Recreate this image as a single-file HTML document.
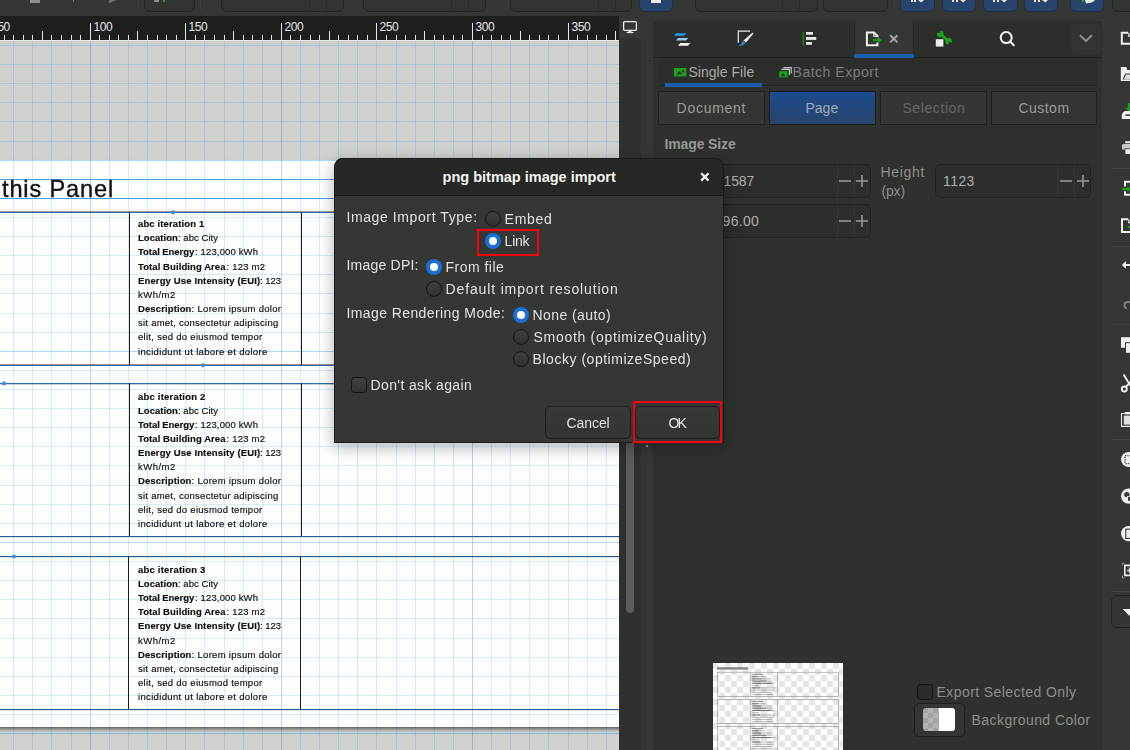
<!DOCTYPE html>
<html><head><meta charset="utf-8"><title>Inkscape</title>
<style>
html,body{margin:0;padding:0}
body{width:1130px;height:750px;overflow:hidden;position:relative;background:#353734;font-family:"Liberation Sans",sans-serif;}
div,span,svg{position:absolute;box-sizing:border-box}
.t{white-space:pre;line-height:1;}
.tb{top:-4px;height:16px;border:1px solid #232522;border-radius:6px;background:#323431}
.tb.bl{background:#29446c;border-color:#1d2f4c}
.tb i{position:absolute;top:0;bottom:0;width:1px;background:#2a2c29}
.btn{border:1px solid #1f211e;background:#343633}
.spin{border:1px solid #1f211e;border-radius:5px;background:#2c2e2b}
.spin i{position:absolute;top:0;bottom:0;width:1px;background:#363835}
.radio{width:16px;height:16px;border-radius:50%;border:1.2px solid #121411;background:linear-gradient(#3e403d,#30322f)}
.radio.on{border:none;background:#1a6fd9}
.radio.on::after{content:"";position:absolute;left:3.8px;top:3.8px;width:8.4px;height:8.4px;border-radius:50%;background:#fff}
.chk{width:16px;height:16px;border-radius:3.5px;border:1.2px solid #141613;background:linear-gradient(#3f413e,#323431)}
.dbtn{border:1px solid #1d1f1c;border-radius:5px;background:linear-gradient(#383a37,#323431)}
.red{border:2.2px solid #f80008}
.sep{height:1px;background:#42443f}
.ttl{-webkit-text-stroke:.35px #111}
.ct{-webkit-text-stroke:.16px #101010}

</style></head>
<body>
<div id='topbar' style='left:0;top:0;width:1130px;height:16px;background:#353734;overflow:hidden'>
<div style='left:30px;top:0;width:10px;height:3px;background:#8d8f8c'></div>
<div style='left:73px;top:0;width:1px;height:2px;background:#6d6f6c'></div>
<svg style='left:108px;top:0' width='12' height='4'><path d='M1 0 L9 0 L1 3.2Z' fill='#6d6f6c'/></svg>
<div class='tb' style='left:143.6px;width:51.0px'></div>
<div style='left:154px;top:0;width:5px;height:2px;background:#8d8f8c'></div>
<div style='left:163px;top:0;width:2px;height:2px;background:#1faa1f'></div>
<div style='left:137.5px;top:0;width:1px;height:10px;background:#3d3f3c'></div>
<div style='left:200px;top:0;width:1px;height:10px;background:#3d3f3c'></div>
<div class='tb' style='left:221.0px;width:122.6px'><i style='left:86.6px'></i><i style='left:103.6px'></i></div>
<div class='tb' style='left:363.4px;width:122.3px'><i style='left:86.3px'></i><i style='left:103.3px'></i></div>
<div class='tb' style='left:510.4px;width:122.1px'><i style='left:86.6px'></i><i style='left:103.6px'></i></div>
<div class='tb bl' style='left:638.7px;width:34.3px'></div>
<div style='left:651px;top:0;width:10px;height:3px;background:#efefed'></div>
<div class='tb' style='left:695.3px;width:122.3px'><i style='left:86.1px'></i><i style='left:103.1px'></i></div>
<div class='tb' style='left:823.2px;width:65.2px'></div>
<div style='left:894px;top:0;width:1px;height:10px;background:#3d3f3c'></div>
<div class='tb bl' style='left:900.4px;width:35.0px'></div>
<div style='left:910.9px;top:0;width:2px;height:2px;background:#e8e8e6'></div>
<div style='left:914.4px;top:0;width:2px;height:2px;background:#e8e8e6'></div>
<svg style='left:918.4px;top:0' width='8' height='4'><path d='M0 0 L6 0 L3.4 2.6Z' fill='#e8e8e6'/></svg>
<div class='tb bl' style='left:941.5px;width:34.9px'></div>
<div style='left:952.0px;top:0;width:2px;height:2px;background:#e8e8e6'></div>
<div style='left:955.5px;top:0;width:2px;height:2px;background:#e8e8e6'></div>
<svg style='left:959.5px;top:0' width='8' height='4'><path d='M0 0 L6 0 L3.4 2.6Z' fill='#e8e8e6'/></svg>
<div class='tb bl' style='left:982.5px;width:35.0px'></div>
<div style='left:993.0px;top:0;width:2px;height:2px;background:#e8e8e6'></div>
<div style='left:996.5px;top:0;width:2px;height:2px;background:#e8e8e6'></div>
<svg style='left:1000.5px;top:0' width='8' height='4'><path d='M0 0 L6 0 L3.4 2.6Z' fill='#e8e8e6'/></svg>
<div class='tb bl' style='left:1023.5px;width:34.9px'></div>
<div style='left:1034.0px;top:0;width:2px;height:2px;background:#e8e8e6'></div>
<div style='left:1037.5px;top:0;width:2px;height:2px;background:#e8e8e6'></div>
<svg style='left:1041.5px;top:0' width='8' height='4'><path d='M0 0 L6 0 L3.4 2.6Z' fill='#e8e8e6'/></svg>
<div class='tb bl' style='left:1069.6px;width:34.8px'></div>
<div style='left:1082px;top:0;width:2px;height:2px;background:#1faa1f'></div>
<svg style='left:1085px;top:0' width='12' height='4'><path d='M0 0 L10 0 Q8 3 1 3.5Z' fill='#e8e8e6'/></svg>
<div class='tb' style='left:1111.6px;width:28.4px'></div>
</div>
<div id='ruler' style='left:0;top:16px;width:619px;height:25px;background:#1d1f1c;overflow:hidden'>
<svg style='left:0;top:0' width='619' height='25' shape-rendering='crispEdges'><rect x='0' y='24' width='619' height='1' fill='#e9e9e7'/><rect x='4' y='19' width='1' height='5' fill='#e9e9e7'/><rect x='13' y='19' width='1' height='5' fill='#e9e9e7'/><rect x='23' y='19' width='1' height='5' fill='#e9e9e7'/><rect x='32' y='19' width='1' height='5' fill='#e9e9e7'/><rect x='42' y='15' width='1' height='9' fill='#e9e9e7'/><rect x='51' y='19' width='1' height='5' fill='#e9e9e7'/><rect x='61' y='19' width='1' height='5' fill='#e9e9e7'/><rect x='71' y='19' width='1' height='5' fill='#e9e9e7'/><rect x='80' y='19' width='1' height='5' fill='#e9e9e7'/><rect x='90' y='7' width='1' height='17' fill='#e9e9e7'/><rect x='99' y='19' width='1' height='5' fill='#e9e9e7'/><rect x='109' y='19' width='1' height='5' fill='#e9e9e7'/><rect x='118' y='19' width='1' height='5' fill='#e9e9e7'/><rect x='128' y='19' width='1' height='5' fill='#e9e9e7'/><rect x='137' y='15' width='1' height='9' fill='#e9e9e7'/><rect x='147' y='19' width='1' height='5' fill='#e9e9e7'/><rect x='157' y='19' width='1' height='5' fill='#e9e9e7'/><rect x='166' y='19' width='1' height='5' fill='#e9e9e7'/><rect x='176' y='19' width='1' height='5' fill='#e9e9e7'/><rect x='185' y='7' width='1' height='17' fill='#e9e9e7'/><rect x='195' y='19' width='1' height='5' fill='#e9e9e7'/><rect x='204' y='19' width='1' height='5' fill='#e9e9e7'/><rect x='214' y='19' width='1' height='5' fill='#e9e9e7'/><rect x='224' y='19' width='1' height='5' fill='#e9e9e7'/><rect x='233' y='15' width='1' height='9' fill='#e9e9e7'/><rect x='243' y='19' width='1' height='5' fill='#e9e9e7'/><rect x='252' y='19' width='1' height='5' fill='#e9e9e7'/><rect x='262' y='19' width='1' height='5' fill='#e9e9e7'/><rect x='271' y='19' width='1' height='5' fill='#e9e9e7'/><rect x='281' y='7' width='1' height='17' fill='#e9e9e7'/><rect x='290' y='19' width='1' height='5' fill='#e9e9e7'/><rect x='300' y='19' width='1' height='5' fill='#e9e9e7'/><rect x='310' y='19' width='1' height='5' fill='#e9e9e7'/><rect x='319' y='19' width='1' height='5' fill='#e9e9e7'/><rect x='329' y='15' width='1' height='9' fill='#e9e9e7'/><rect x='338' y='19' width='1' height='5' fill='#e9e9e7'/><rect x='348' y='19' width='1' height='5' fill='#e9e9e7'/><rect x='357' y='19' width='1' height='5' fill='#e9e9e7'/><rect x='367' y='19' width='1' height='5' fill='#e9e9e7'/><rect x='376' y='7' width='1' height='17' fill='#e9e9e7'/><rect x='386' y='19' width='1' height='5' fill='#e9e9e7'/><rect x='396' y='19' width='1' height='5' fill='#e9e9e7'/><rect x='405' y='19' width='1' height='5' fill='#e9e9e7'/><rect x='415' y='19' width='1' height='5' fill='#e9e9e7'/><rect x='424' y='15' width='1' height='9' fill='#e9e9e7'/><rect x='434' y='19' width='1' height='5' fill='#e9e9e7'/><rect x='443' y='19' width='1' height='5' fill='#e9e9e7'/><rect x='453' y='19' width='1' height='5' fill='#e9e9e7'/><rect x='462' y='19' width='1' height='5' fill='#e9e9e7'/><rect x='472' y='7' width='1' height='17' fill='#e9e9e7'/><rect x='482' y='19' width='1' height='5' fill='#e9e9e7'/><rect x='491' y='19' width='1' height='5' fill='#e9e9e7'/><rect x='501' y='19' width='1' height='5' fill='#e9e9e7'/><rect x='510' y='19' width='1' height='5' fill='#e9e9e7'/><rect x='520' y='15' width='1' height='9' fill='#e9e9e7'/><rect x='529' y='19' width='1' height='5' fill='#e9e9e7'/><rect x='539' y='19' width='1' height='5' fill='#e9e9e7'/><rect x='548' y='19' width='1' height='5' fill='#e9e9e7'/><rect x='558' y='19' width='1' height='5' fill='#e9e9e7'/><rect x='568' y='7' width='1' height='17' fill='#e9e9e7'/><rect x='577' y='19' width='1' height='5' fill='#e9e9e7'/><rect x='587' y='19' width='1' height='5' fill='#e9e9e7'/><rect x='596' y='19' width='1' height='5' fill='#e9e9e7'/><rect x='606' y='19' width='1' height='5' fill='#e9e9e7'/><rect x='615' y='15' width='1' height='9' fill='#e9e9e7'/></svg>
<span class='t ' style='left:-2.50px;top:4.84px;font-size:12px;color:#e6e6ee;letter-spacing:-0.674px;'>50</span>
<span class='t ' style='left:93.50px;top:4.84px;font-size:12px;color:#e6e6ee;letter-spacing:-0.374px;'>100</span>
<span class='t ' style='left:188.50px;top:4.84px;font-size:12px;color:#e6e6ee;letter-spacing:-0.374px;'>150</span>
<span class='t ' style='left:284.50px;top:4.84px;font-size:12px;color:#e6e6ee;letter-spacing:-0.374px;'>200</span>
<span class='t ' style='left:379.50px;top:4.84px;font-size:12px;color:#e6e6ee;letter-spacing:-0.374px;'>250</span>
<span class='t ' style='left:475.50px;top:4.84px;font-size:12px;color:#e6e6ee;letter-spacing:-0.374px;'>300</span>
<span class='t ' style='left:571.50px;top:4.84px;font-size:12px;color:#e6e6ee;letter-spacing:-0.374px;'>350</span>
</div>
<div id='canvas' style='left:0;top:41px;width:619px;height:709px;background:#d1d2d0;overflow:hidden;will-change:transform;opacity:.999'>
<div style='left:-20px;top:119px;width:700px;height:567px;background:#fff;box-shadow:0 3px 4px -1px rgba(0,0,0,.6)'></div>
<svg style='left:0;top:0' width='619' height='709' shape-rendering='crispEdges'><rect x='13' y='0' width='1' height='709' fill='rgba(0,140,230,0.165)'/><rect x='32' y='0' width='1' height='709' fill='rgba(0,140,230,0.165)'/><rect x='51' y='0' width='1' height='709' fill='rgba(0,140,230,0.165)'/><rect x='71' y='0' width='1' height='709' fill='rgba(0,140,230,0.165)'/><rect x='90' y='0' width='1' height='709' fill='rgba(0,130,220,0.30)'/><rect x='109' y='0' width='1' height='709' fill='rgba(0,140,230,0.165)'/><rect x='128' y='0' width='1' height='709' fill='rgba(0,140,230,0.165)'/><rect x='147' y='0' width='1' height='709' fill='rgba(0,140,230,0.165)'/><rect x='166' y='0' width='1' height='709' fill='rgba(0,140,230,0.165)'/><rect x='185' y='0' width='1' height='709' fill='rgba(0,140,230,0.165)'/><rect x='204' y='0' width='1' height='709' fill='rgba(0,140,230,0.165)'/><rect x='224' y='0' width='1' height='709' fill='rgba(0,140,230,0.165)'/><rect x='243' y='0' width='1' height='709' fill='rgba(0,140,230,0.165)'/><rect x='262' y='0' width='1' height='709' fill='rgba(0,140,230,0.165)'/><rect x='281' y='0' width='1' height='709' fill='rgba(0,130,220,0.30)'/><rect x='300' y='0' width='1' height='709' fill='rgba(0,140,230,0.165)'/><rect x='319' y='0' width='1' height='709' fill='rgba(0,140,230,0.165)'/><rect x='338' y='0' width='1' height='709' fill='rgba(0,140,230,0.165)'/><rect x='357' y='0' width='1' height='709' fill='rgba(0,140,230,0.165)'/><rect x='376' y='0' width='1' height='709' fill='rgba(0,140,230,0.165)'/><rect x='396' y='0' width='1' height='709' fill='rgba(0,140,230,0.165)'/><rect x='415' y='0' width='1' height='709' fill='rgba(0,140,230,0.165)'/><rect x='434' y='0' width='1' height='709' fill='rgba(0,140,230,0.165)'/><rect x='453' y='0' width='1' height='709' fill='rgba(0,140,230,0.165)'/><rect x='472' y='0' width='1' height='709' fill='rgba(0,130,220,0.30)'/><rect x='491' y='0' width='1' height='709' fill='rgba(0,140,230,0.165)'/><rect x='510' y='0' width='1' height='709' fill='rgba(0,140,230,0.165)'/><rect x='529' y='0' width='1' height='709' fill='rgba(0,140,230,0.165)'/><rect x='548' y='0' width='1' height='709' fill='rgba(0,140,230,0.165)'/><rect x='568' y='0' width='1' height='709' fill='rgba(0,140,230,0.165)'/><rect x='587' y='0' width='1' height='709' fill='rgba(0,140,230,0.165)'/><rect x='606' y='0' width='1' height='709' fill='rgba(0,140,230,0.165)'/><rect x='0' y='4' width='619' height='1' fill='rgba(0,140,230,0.165)'/><rect x='0' y='23' width='619' height='1' fill='rgba(0,140,230,0.165)'/><rect x='0' y='42' width='619' height='1' fill='rgba(0,140,230,0.165)'/><rect x='0' y='61' width='619' height='1' fill='rgba(0,140,230,0.165)'/><rect x='0' y='80' width='619' height='1' fill='rgba(0,140,230,0.165)'/><rect x='0' y='100' width='619' height='1' fill='rgba(0,140,230,0.165)'/><rect x='0' y='119' width='619' height='1' fill='rgba(0,130,220,0.30)'/><rect x='0' y='138' width='619' height='1' fill='rgba(0,140,230,0.165)'/><rect x='0' y='157' width='619' height='1' fill='rgba(0,140,230,0.165)'/><rect x='0' y='176' width='619' height='1' fill='rgba(0,140,230,0.165)'/><rect x='0' y='195' width='619' height='1' fill='rgba(0,140,230,0.165)'/><rect x='0' y='214' width='619' height='1' fill='rgba(0,140,230,0.165)'/><rect x='0' y='233' width='619' height='1' fill='rgba(0,140,230,0.165)'/><rect x='0' y='252' width='619' height='1' fill='rgba(0,140,230,0.165)'/><rect x='0' y='272' width='619' height='1' fill='rgba(0,140,230,0.165)'/><rect x='0' y='291' width='619' height='1' fill='rgba(0,140,230,0.165)'/><rect x='0' y='310' width='619' height='1' fill='rgba(0,130,220,0.30)'/><rect x='0' y='329' width='619' height='1' fill='rgba(0,140,230,0.165)'/><rect x='0' y='348' width='619' height='1' fill='rgba(0,140,230,0.165)'/><rect x='0' y='367' width='619' height='1' fill='rgba(0,140,230,0.165)'/><rect x='0' y='386' width='619' height='1' fill='rgba(0,140,230,0.165)'/><rect x='0' y='405' width='619' height='1' fill='rgba(0,140,230,0.165)'/><rect x='0' y='424' width='619' height='1' fill='rgba(0,140,230,0.165)'/><rect x='0' y='444' width='619' height='1' fill='rgba(0,140,230,0.165)'/><rect x='0' y='463' width='619' height='1' fill='rgba(0,140,230,0.165)'/><rect x='0' y='482' width='619' height='1' fill='rgba(0,140,230,0.165)'/><rect x='0' y='501' width='619' height='1' fill='rgba(0,130,220,0.30)'/><rect x='0' y='520' width='619' height='1' fill='rgba(0,140,230,0.165)'/><rect x='0' y='539' width='619' height='1' fill='rgba(0,140,230,0.165)'/><rect x='0' y='558' width='619' height='1' fill='rgba(0,140,230,0.165)'/><rect x='0' y='577' width='619' height='1' fill='rgba(0,140,230,0.165)'/><rect x='0' y='597' width='619' height='1' fill='rgba(0,140,230,0.165)'/><rect x='0' y='616' width='619' height='1' fill='rgba(0,140,230,0.165)'/><rect x='0' y='635' width='619' height='1' fill='rgba(0,140,230,0.165)'/><rect x='0' y='654' width='619' height='1' fill='rgba(0,140,230,0.165)'/><rect x='0' y='673' width='619' height='1' fill='rgba(0,140,230,0.165)'/><rect x='0' y='692' width='619' height='1' fill='rgba(0,130,220,0.30)'/></svg>
<div style='left:0;top:138px;width:619px;height:1px;background:#4d9de6'></div>
<div style='left:0;top:157px;width:619px;height:1px;background:#4d9de6'></div>
<svg style='left:0;top:0' width='619' height='709'><rect x='0' y='170' width='619' height='1' fill='rgba(0,0,0,.38)' shape-rendering='crispEdges'/><rect x='0' y='171' width='619' height='1' fill='#2c6cb0' shape-rendering='crispEdges'/><rect x='0' y='323' width='619' height='1' fill='rgba(0,0,0,.42)' shape-rendering='crispEdges'/><rect x='0' y='324' width='619' height='1' fill='#2c6cb0' shape-rendering='crispEdges'/><rect x='0' y='342' width='619' height='1' fill='#2c6cb0' shape-rendering='crispEdges'/><rect x='0' y='343' width='619' height='1' fill='rgba(0,0,0,.2)' shape-rendering='crispEdges'/><rect x='0' y='495' width='619' height='1' fill='#1f5d99' shape-rendering='crispEdges'/><rect x='0' y='496' width='619' height='1' fill='rgba(0,0,0,.12)' shape-rendering='crispEdges'/><rect x='0' y='515' width='619' height='1' fill='#1f5d99' shape-rendering='crispEdges'/><rect x='0' y='516' width='619' height='1' fill='rgba(0,0,0,.12)' shape-rendering='crispEdges'/><rect x='0' y='668' width='619' height='1' fill='#1f5d99' shape-rendering='crispEdges'/><rect x='0' y='669' width='619' height='1' fill='rgba(0,0,0,.1)' shape-rendering='crispEdges'/><rect x='129' y='171.00' width='1' height='153.00' fill='#1c1c1c' shape-rendering='crispEdges'/><rect x='301' y='171.00' width='1' height='153.00' fill='#1c1c1c' shape-rendering='crispEdges'/><rect x='129' y='342.00' width='1' height='153.00' fill='#1c1c1c' shape-rendering='crispEdges'/><rect x='301' y='342.00' width='1' height='153.00' fill='#1c1c1c' shape-rendering='crispEdges'/><rect x='128' y='515.00' width='1' height='153.00' fill='#1c1c1c' shape-rendering='crispEdges'/><rect x='300' y='515.00' width='1' height='153.00' fill='#1c1c1c' shape-rendering='crispEdges'/><circle cx='173.0' cy='171.3' r='2.1' fill='#3f8fe2'/><circle cx='203.0' cy='324.3' r='2.1' fill='#3f8fe2'/><circle cx='4.0' cy='342.4' r='2.1' fill='#3f8fe2'/><circle cx='14.0' cy='515.5' r='2.1' fill='#3f8fe2'/></svg>
<span class='t ttl' style='left:2.00px;top:136.62px;font-size:23.6px;color:#111;letter-spacing:0.847px;'>this Panel</span>
<span class='t ct' style='left:138.00px;top:178.16px;font-size:9.5px;color:#101010;font-weight:700;letter-spacing:0.134px;'>abc iteration 1</span>
<span class='t ct' style='left:138.00px;top:192.31px;font-size:9.5px;color:#101010;font-weight:700;letter-spacing:0.032px;'>Location</span>
<span class='t ct' style='left:178.00px;top:192.31px;font-size:9.5px;color:#101010;letter-spacing:0.045px;'>: abc City</span>
<span class='t ct' style='left:138.00px;top:206.46px;font-size:9.5px;color:#101010;font-weight:700;letter-spacing:-0.050px;'>Total Energy</span>
<span class='t ct' style='left:195.00px;top:206.46px;font-size:9.5px;color:#101010;letter-spacing:0.145px;'>: 123,000 kWh</span>
<span class='t ct' style='left:138.00px;top:220.61px;font-size:9.5px;color:#101010;font-weight:700;letter-spacing:0.083px;'>Total Building Area</span>
<span class='t ct' style='left:226.60px;top:220.61px;font-size:9.5px;color:#101010;letter-spacing:0.205px;'>: 123 m2</span>
<span class='t ct' style='left:138.00px;top:234.76px;font-size:9.5px;color:#101010;font-weight:700;letter-spacing:0.135px;'>Energy Use Intensity (EUI)</span>
<span class='t ct' style='left:260.00px;top:234.76px;font-size:9.5px;color:#101010;letter-spacing:-0.032px;'>: 123</span>
<span class='t ct' style='left:138.00px;top:248.91px;font-size:9.5px;color:#101010;letter-spacing:0.489px;'>kWh/m2</span>
<span class='t ct' style='left:138.00px;top:263.06px;font-size:9.5px;color:#101010;font-weight:700;letter-spacing:0.114px;'>Description</span>
<span class='t ct' style='left:191.60px;top:263.06px;font-size:9.5px;color:#101010;letter-spacing:0.303px;'>: Lorem ipsum dolor</span>
<span class='t ct' style='left:138.00px;top:277.21px;font-size:9.5px;color:#101010;letter-spacing:0.250px;'>sit amet, consectetur adipiscing</span>
<span class='t ct' style='left:138.00px;top:291.36px;font-size:9.5px;color:#101010;letter-spacing:0.287px;'>elit, sed do eiusmod tempor</span>
<span class='t ct' style='left:138.00px;top:305.51px;font-size:9.5px;color:#101010;letter-spacing:0.342px;'>incididunt ut labore et dolore</span>
<span class='t ct' style='left:138.00px;top:350.56px;font-size:9.5px;color:#101010;font-weight:700;letter-spacing:0.205px;'>abc iteration 2</span>
<span class='t ct' style='left:138.00px;top:364.71px;font-size:9.5px;color:#101010;font-weight:700;letter-spacing:0.032px;'>Location</span>
<span class='t ct' style='left:178.00px;top:364.71px;font-size:9.5px;color:#101010;letter-spacing:0.045px;'>: abc City</span>
<span class='t ct' style='left:138.00px;top:378.86px;font-size:9.5px;color:#101010;font-weight:700;letter-spacing:-0.050px;'>Total Energy</span>
<span class='t ct' style='left:195.00px;top:378.86px;font-size:9.5px;color:#101010;letter-spacing:0.145px;'>: 123,000 kWh</span>
<span class='t ct' style='left:138.00px;top:393.01px;font-size:9.5px;color:#101010;font-weight:700;letter-spacing:0.083px;'>Total Building Area</span>
<span class='t ct' style='left:226.60px;top:393.01px;font-size:9.5px;color:#101010;letter-spacing:0.205px;'>: 123 m2</span>
<span class='t ct' style='left:138.00px;top:407.16px;font-size:9.5px;color:#101010;font-weight:700;letter-spacing:0.135px;'>Energy Use Intensity (EUI)</span>
<span class='t ct' style='left:260.00px;top:407.16px;font-size:9.5px;color:#101010;letter-spacing:-0.032px;'>: 123</span>
<span class='t ct' style='left:138.00px;top:421.31px;font-size:9.5px;color:#101010;letter-spacing:0.489px;'>kWh/m2</span>
<span class='t ct' style='left:138.00px;top:435.46px;font-size:9.5px;color:#101010;font-weight:700;letter-spacing:0.114px;'>Description</span>
<span class='t ct' style='left:191.60px;top:435.46px;font-size:9.5px;color:#101010;letter-spacing:0.303px;'>: Lorem ipsum dolor</span>
<span class='t ct' style='left:138.00px;top:449.61px;font-size:9.5px;color:#101010;letter-spacing:0.250px;'>sit amet, consectetur adipiscing</span>
<span class='t ct' style='left:138.00px;top:463.76px;font-size:9.5px;color:#101010;letter-spacing:0.287px;'>elit, sed do eiusmod tempor</span>
<span class='t ct' style='left:138.00px;top:477.91px;font-size:9.5px;color:#101010;letter-spacing:0.342px;'>incididunt ut labore et dolore</span>
<span class='t ct' style='left:138.00px;top:523.86px;font-size:9.5px;color:#101010;font-weight:700;letter-spacing:0.205px;'>abc iteration 3</span>
<span class='t ct' style='left:138.00px;top:538.01px;font-size:9.5px;color:#101010;font-weight:700;letter-spacing:0.032px;'>Location</span>
<span class='t ct' style='left:178.00px;top:538.01px;font-size:9.5px;color:#101010;letter-spacing:0.045px;'>: abc City</span>
<span class='t ct' style='left:138.00px;top:552.16px;font-size:9.5px;color:#101010;font-weight:700;letter-spacing:-0.050px;'>Total Energy</span>
<span class='t ct' style='left:195.00px;top:552.16px;font-size:9.5px;color:#101010;letter-spacing:0.145px;'>: 123,000 kWh</span>
<span class='t ct' style='left:138.00px;top:566.31px;font-size:9.5px;color:#101010;font-weight:700;letter-spacing:0.083px;'>Total Building Area</span>
<span class='t ct' style='left:226.60px;top:566.31px;font-size:9.5px;color:#101010;letter-spacing:0.205px;'>: 123 m2</span>
<span class='t ct' style='left:138.00px;top:580.46px;font-size:9.5px;color:#101010;font-weight:700;letter-spacing:0.135px;'>Energy Use Intensity (EUI)</span>
<span class='t ct' style='left:260.00px;top:580.46px;font-size:9.5px;color:#101010;letter-spacing:-0.032px;'>: 123</span>
<span class='t ct' style='left:138.00px;top:594.61px;font-size:9.5px;color:#101010;letter-spacing:0.489px;'>kWh/m2</span>
<span class='t ct' style='left:138.00px;top:608.76px;font-size:9.5px;color:#101010;font-weight:700;letter-spacing:0.114px;'>Description</span>
<span class='t ct' style='left:191.60px;top:608.76px;font-size:9.5px;color:#101010;letter-spacing:0.303px;'>: Lorem ipsum dolor</span>
<span class='t ct' style='left:138.00px;top:622.91px;font-size:9.5px;color:#101010;letter-spacing:0.250px;'>sit amet, consectetur adipiscing</span>
<span class='t ct' style='left:138.00px;top:637.06px;font-size:9.5px;color:#101010;letter-spacing:0.287px;'>elit, sed do eiusmod tempor</span>
<span class='t ct' style='left:138.00px;top:651.21px;font-size:9.5px;color:#101010;letter-spacing:0.342px;'>incididunt ut labore et dolore</span>
</div>
<div style='left:619px;top:38px;width:22px;height:712px;background:#2f312e'></div>
<div style='left:626px;top:200px;width:8px;height:413px;border-radius:4px;background:#5b5d5a'></div>
<svg style='left:622px;top:20px' width='16' height='14' viewBox='0 0 16 14'><rect x='1.6' y='1.6' width='12.8' height='8.8' rx='1.2' fill='none' stroke='#e8e8e6' stroke-width='1.3'/><rect x='6.5' y='10.5' width='3' height='1.6' fill='#e8e8e6'/><rect x='4.6' y='11.9' width='6.8' height='1.2' fill='#e8e8e6'/></svg>
<div style='left:646px;top:444.6px;width:2.4px;height:2.4px;border-radius:50%;background:#b5b7b4'></div>
<div id='dock' style='left:653px;top:21px;width:449px;height:729px;background:#2f312e;overflow:hidden'>
<div style='left:0;top:0;width:449px;height:37px;background:#2c2e2b;border-bottom:1px solid #1f211e'></div>
<div style='left:201px;top:0;width:60px;height:37px;background:#353734;border-left:1px solid #232522;border-right:1px solid #232522'></div>
<div style='left:201px;top:33px;width:60px;height:4px;background:#1c5cad'></div>
<svg style='left:20px;top:11px' width='20' height='16' viewBox='673 32 20 16'><path d='M676.2 33.2 L686.4 33.2 L684 35.8 L673.8 35.8Z' fill='#1e9bef'/><path d='M678.3 38 L688.4 38 L686 40.6 L675.9 40.6Z' fill='#8ecbf2'/><path d='M680.4 43 L690.4 43 L688 45.8 L677.9 45.8Z' fill='#f2f2f0'/></svg>
<svg style='left:84px;top:9px' width='18' height='18' viewBox='737 30 18 18'><path d='M738.3 42.8 L738.3 31.1 L750 31.1' fill='none' stroke='#e8e8e6' stroke-width='1.2'/><path d='M752.6 32.4 L753.6 33.4 L746 42.4 L743.4 40.4Z' fill='#e8e8e6'/><path d='M742.9 41 L745.2 42.9 Q743.6 45.4 738.6 46.3 Q741.6 44.2 742.9 41Z' fill='#1e8fe8'/></svg>
<svg style='left:149px;top:10px' width='16' height='16' viewBox='802 31 16 16'><rect x='802.6' y='31.8' width='1.1' height='13.4' fill='#17a317'/><rect x='806' y='32' width='7' height='2.7' fill='#e8e8e6'/><rect x='806' y='37' width='10.3' height='2.9' fill='#e8e8e6'/><rect x='806' y='42' width='5.9' height='2.8' fill='#e8e8e6'/></svg>
<svg style='left:212px;top:9.6px' width='18' height='16' viewBox='0 0 18 16'><path d='M12.4 6.2 L12.4 4.9 L9 1.4 L1.9 1.4 L1.9 14.3 L12.4 14.3 L12.4 11.6' fill='none' stroke='#f2f2f0' stroke-width='2' stroke-linejoin='miter'/><path d='M8.8 1.2 L8.8 5.2 L12.6 5.2' fill='none' stroke='#f2f2f0' stroke-width='1.1'/><path d='M7.8 8.3 L12.8 8.3 L12.8 6.2 L17 9.2 L12.8 12.2 L12.8 10.1 L7.8 10.1Z' fill='#17a317'/></svg>
<svg style='left:236.4px;top:13.2px' width='10' height='10' viewBox='0 0 10 10'><path d='M1.2 1.2 L8.4 8.4 M8.4 1.2 L1.2 8.4' stroke='#a3a5a2' stroke-width='2'/></svg>
<svg style='left:282px;top:9.4px' width='18' height='18' viewBox='0 0 18 18'><path d='M5.6 4.2 L13.2 10.8' stroke='#19a519' stroke-width='2.8'/><circle cx='5.2' cy='3.9' r='3.3' fill='#19a519'/><path d='M5 3.6 L3.4 -1.4 L-1.4 3.2Z' fill='#2c2e2b' transform='rotate(18 5.2 3.9)'/><circle cx='13.6' cy='11.2' r='3.3' fill='#19a519'/><path d='M13.8 11.4 L15.4 16.6 L20.2 11.8Z' fill='#2c2e2b' transform='rotate(18 13.6 11.2)'/><rect x='0.8' y='9.2' width='7.6' height='7.4' fill='#ebebe9'/></svg>
<svg style='left:346px;top:10px' width='17' height='16' viewBox='0 0 17 16'><circle cx='7.2' cy='6.6' r='5.5' fill='none' stroke='#f2f2f0' stroke-width='2'/><path d='M11.4 10.8 L14.8 14.2' stroke='#f2f2f0' stroke-width='2.1' stroke-linecap='round'/></svg>
<div style='left:418px;top:3px;width:30px;height:30px;border-radius:5px;background:#323431'></div>
<svg style='left:426px;top:13px' width='14' height='9' viewBox='0 0 14 9'><path d='M1 1.2 L7 7 L13 1.2' fill='none' stroke='#8b8d8a' stroke-width='2.1'/></svg>
<div style='left:5px;top:37px;width:439px;height:28px;background:#2c2e2b'></div>
<div style='left:5px;top:64px;width:439px;height:1px;background:#1f211e'></div>
<div style='left:12px;top:62.3px;width:97px;height:3.4px;background:#1c5cad'></div>
<svg style='left:20.8px;top:47.2px' width='13' height='9' viewBox='0 0 13 9'><rect width='12.4' height='8.4' fill='#17a317'/><path d='M2.6 6.4 L5.4 2.6 L8.2 6.4Z' fill='#2c2e2b'/><circle cx='9.2' cy='3.2' r='1.2' fill='#2c2e2b'/></svg>
<span class='t ' style='left:35.40px;top:44.25px;font-size:14px;color:#a9aba8;letter-spacing:0.042px;'>Single File</span>
<svg style='left:126.0px;top:45.6px' width='13' height='11' viewBox='0 0 13 11'><path d='M4.4 0.6 L12.2 0.6 L12.2 6.4' fill='none' stroke='#c9cbc8' stroke-width='1.1'/><path d='M2.4 2.4 L10.4 2.4 L10.4 8.2' fill='none' stroke='#c9cbc8' stroke-width='1.1'/><rect x='0.2' y='4.2' width='8.4' height='6.2' fill='#17a317'/><path d='M1.6 9.2 L4 6 L6.2 9.2Z' fill='#2c2e2b'/></svg>
<span class='t ' style='left:139.60px;top:44.25px;font-size:14px;color:#7b7d7a;letter-spacing:0.503px;'>Batch Export</span>
<div class='btn' style='left:5.0px;top:70.0px;width:107.0px;height:33.6px;'></div>
<span class='t ' style='left:23.60px;top:80.15px;font-size:14px;color:#9b9d9a;letter-spacing:0.726px;'>Document</span>
<div class='btn' style='left:116.4px;top:70.0px;width:106.2px;height:33.6px;background:linear-gradient(#1b4d90 0%,#1f4881 35%,#29446c 100%);border-color:#1c1e1b;'></div>
<span class='t ' style='left:152.40px;top:80.15px;font-size:14px;color:#a4aab5;letter-spacing:0.030px;'>Page</span>
<div class='btn' style='left:227.0px;top:70.0px;width:107.0px;height:33.6px;'></div>
<span class='t ' style='left:249.40px;top:80.15px;font-size:14px;color:#656764;letter-spacing:0.599px;'>Selection</span>
<div class='btn' style='left:338.4px;top:70.0px;width:105.6px;height:33.6px;'></div>
<span class='t ' style='left:365.40px;top:80.15px;font-size:14px;color:#9b9d9a;letter-spacing:0.486px;'>Custom</span>
<span class='t ' style='left:11.40px;top:116.15px;font-size:14px;color:#969895;font-weight:700;letter-spacing:-0.109px;'>Image Size</span>
<div class='spin' style='left:37.0px;top:143.4px;width:180.6px;height:33.6px'><i style='left:145.6px'></i><i style='left:162.6px'></i></div>
<svg style='left:185.2px;top:153.2px' width='14' height='14' viewBox='0 0 14 14'><path d='M1 7 L13 7' stroke='#9c9e9b' stroke-width='1.5'/></svg>
<svg style='left:202.2px;top:153.2px' width='14' height='14' viewBox='0 0 14 14'><path d='M1 7 L13 7 M7 1 L7 13' stroke='#9c9e9b' stroke-width='1.5'/></svg>
<span class='t ' style='left:70.60px;top:152.85px;font-size:14px;color:#adafac;letter-spacing:-0.186px;'>1587</span>
<div class='spin' style='left:37.0px;top:183.4px;width:180.6px;height:33.6px'><i style='left:145.6px'></i><i style='left:162.6px'></i></div>
<svg style='left:185.2px;top:193.2px' width='14' height='14' viewBox='0 0 14 14'><path d='M1 7 L13 7' stroke='#9c9e9b' stroke-width='1.5'/></svg>
<svg style='left:202.2px;top:193.2px' width='14' height='14' viewBox='0 0 14 14'><path d='M1 7 L13 7 M7 1 L7 13' stroke='#9c9e9b' stroke-width='1.5'/></svg>
<span class='t ' style='left:69.60px;top:192.85px;font-size:14px;color:#adafac;letter-spacing:0.288px;'>96.00</span>
<div class='spin' style='left:282.4px;top:143.4px;width:155.6px;height:33.6px'><i style='left:120.6px'></i><i style='left:137.6px'></i></div>
<svg style='left:405.6px;top:153.2px' width='14' height='14' viewBox='0 0 14 14'><path d='M1 7 L13 7' stroke='#9c9e9b' stroke-width='1.5'/></svg>
<svg style='left:422.6px;top:153.2px' width='14' height='14' viewBox='0 0 14 14'><path d='M1 7 L13 7 M7 1 L7 13' stroke='#9c9e9b' stroke-width='1.5'/></svg>
<span class='t ' style='left:290.00px;top:152.85px;font-size:14px;color:#adafac;letter-spacing:0.427px;'>1123</span>
<span class='t ' style='left:227.60px;top:143.75px;font-size:14px;color:#8d8f8c;letter-spacing:0.644px;'>Height</span>
<span class='t ' style='left:228.60px;top:162.55px;font-size:14px;color:#8d8f8c;letter-spacing:-0.216px;'>(px)</span>
<svg style='left:60px;top:642px' width='130' height='90' viewBox='0 0 130 90'><defs><pattern id='chk' width='12' height='12' patternUnits='userSpaceOnUse'><rect width='12' height='12' fill='#fff'/><rect width='6' height='6' fill='#e6e7e5'/><rect x='6' y='6' width='6' height='6' fill='#e6e7e5'/></pattern></defs><rect width='130' height='90' fill='url(#chk)'/><rect x='4' y='4.2' width='31' height='2.4' fill='#6a6a6a' opacity='.8'/><rect x='4.3' y='9.2' width='121.2' height='24.4' fill='none' stroke='#8a8a8a' stroke-width='.6'/><path d='M37.7 9.2 v24.4 M64.5 9.2 v24.4' stroke='#8a8a8a' stroke-width='.6'/><rect x='39.2' y='10.80' width='11' height='1.1' fill='#777' opacity='.75'/><rect x='39.2' y='13.05' width='13' height='1.1' fill='#777' opacity='.5'/><rect x='39.2' y='13.05' width='6' height='1.1' fill='#444' opacity='.55'/><rect x='39.2' y='15.30' width='19' height='1.1' fill='#777' opacity='.5'/><rect x='39.2' y='15.30' width='9' height='1.1' fill='#444' opacity='.55'/><rect x='39.2' y='17.55' width='20' height='1.1' fill='#777' opacity='.5'/><rect x='39.2' y='17.55' width='14' height='1.1' fill='#444' opacity='.55'/><rect x='39.2' y='19.80' width='23' height='1.1' fill='#777' opacity='.5'/><rect x='39.2' y='19.80' width='19' height='1.1' fill='#444' opacity='.55'/><rect x='39.2' y='22.05' width='7' height='1.1' fill='#777' opacity='.5'/><rect x='39.2' y='24.30' width='23' height='1.1' fill='#777' opacity='.5'/><rect x='39.2' y='24.30' width='8' height='1.1' fill='#444' opacity='.55'/><rect x='39.2' y='26.55' width='22' height='1.1' fill='#777' opacity='.5'/><rect x='39.2' y='28.80' width='20' height='1.1' fill='#777' opacity='.5'/><rect x='39.2' y='31.05' width='21' height='1.1' fill='#777' opacity='.5'/><rect x='4.3' y='36.3' width='121.2' height='24.4' fill='none' stroke='#8a8a8a' stroke-width='.6'/><path d='M37.7 36.3 v24.4 M64.5 36.3 v24.4' stroke='#8a8a8a' stroke-width='.6'/><rect x='39.2' y='37.90' width='11' height='1.1' fill='#777' opacity='.75'/><rect x='39.2' y='40.15' width='13' height='1.1' fill='#777' opacity='.5'/><rect x='39.2' y='40.15' width='6' height='1.1' fill='#444' opacity='.55'/><rect x='39.2' y='42.40' width='19' height='1.1' fill='#777' opacity='.5'/><rect x='39.2' y='42.40' width='9' height='1.1' fill='#444' opacity='.55'/><rect x='39.2' y='44.65' width='20' height='1.1' fill='#777' opacity='.5'/><rect x='39.2' y='44.65' width='14' height='1.1' fill='#444' opacity='.55'/><rect x='39.2' y='46.90' width='23' height='1.1' fill='#777' opacity='.5'/><rect x='39.2' y='46.90' width='19' height='1.1' fill='#444' opacity='.55'/><rect x='39.2' y='49.15' width='7' height='1.1' fill='#777' opacity='.5'/><rect x='39.2' y='51.40' width='23' height='1.1' fill='#777' opacity='.5'/><rect x='39.2' y='51.40' width='8' height='1.1' fill='#444' opacity='.55'/><rect x='39.2' y='53.65' width='22' height='1.1' fill='#777' opacity='.5'/><rect x='39.2' y='55.90' width='20' height='1.1' fill='#777' opacity='.5'/><rect x='39.2' y='58.15' width='21' height='1.1' fill='#777' opacity='.5'/><rect x='4.3' y='63.4' width='121.2' height='24.4' fill='none' stroke='#8a8a8a' stroke-width='.6'/><path d='M37.7 63.4 v24.4 M64.5 63.4 v24.4' stroke='#8a8a8a' stroke-width='.6'/><rect x='39.2' y='65.00' width='11' height='1.1' fill='#777' opacity='.75'/><rect x='39.2' y='67.25' width='13' height='1.1' fill='#777' opacity='.5'/><rect x='39.2' y='67.25' width='6' height='1.1' fill='#444' opacity='.55'/><rect x='39.2' y='69.50' width='19' height='1.1' fill='#777' opacity='.5'/><rect x='39.2' y='69.50' width='9' height='1.1' fill='#444' opacity='.55'/><rect x='39.2' y='71.75' width='20' height='1.1' fill='#777' opacity='.5'/><rect x='39.2' y='71.75' width='14' height='1.1' fill='#444' opacity='.55'/><rect x='39.2' y='74.00' width='23' height='1.1' fill='#777' opacity='.5'/><rect x='39.2' y='74.00' width='19' height='1.1' fill='#444' opacity='.55'/><rect x='39.2' y='76.25' width='7' height='1.1' fill='#777' opacity='.5'/><rect x='39.2' y='78.50' width='23' height='1.1' fill='#777' opacity='.5'/><rect x='39.2' y='78.50' width='8' height='1.1' fill='#444' opacity='.55'/><rect x='39.2' y='80.75' width='22' height='1.1' fill='#777' opacity='.5'/><rect x='39.2' y='83.00' width='20' height='1.1' fill='#777' opacity='.5'/><rect x='39.2' y='85.25' width='21' height='1.1' fill='#777' opacity='.5'/></svg>
<div class='chk' style='left:264.0px;top:663.2px;background:#2a2c29'></div>
<span class='t ' style='left:283.60px;top:664.15px;font-size:14px;color:#8d8f8c;letter-spacing:0.415px;'>Export Selected Only</span>
<div class='dbtn' style='left:260.6px;top:682.4px;width:51px;height:33.4px;background:#343633'></div>
<svg style='left:270.0px;top:687.0px' width='32' height='23' viewBox='0 0 32 23'><defs><clipPath id='sw'><rect width='32' height='23' rx='3'/></clipPath><pattern id='chk2' width='10' height='10' patternUnits='userSpaceOnUse'><rect width='10' height='10' fill='#b4b5b3'/><rect width='5' height='5' fill='#a3a4a2'/><rect x='5' y='5' width='5' height='5' fill='#a3a4a2'/></pattern></defs><g clip-path='url(#sw)'><rect width='16' height='23' fill='url(#chk2)'/><rect x='16' width='16' height='23' fill='#fff'/></g></svg>
<span class='t ' style='left:318.60px;top:692.15px;font-size:14px;color:#8d8f8c;letter-spacing:0.427px;'>Background Color</span>
</div>
<div id='rtool' style='left:1102px;top:16px;width:28px;height:734px;background:#353734;overflow:hidden'>
<div class='sep' style='left:9px;top:152.0px;width:20px'></div>
<div class='sep' style='left:9px;top:230.0px;width:20px'></div>
<div class='sep' style='left:9px;top:308.0px;width:20px'></div>
<div class='sep' style='left:9px;top:422.6px;width:20px'></div>
<div class='sep' style='left:9px;top:575.0px;width:20px'></div>
<div style='left:9.4px;top:579.4px;width:30px;height:33px;border:1px solid #222421;border-radius:6px;background:#343633'></div>
<svg style='left:0;top:0' width='28' height='734' viewBox='1102 16 28 734'><path d='M1131 32.8 L1121.8 32.8 L1121.8 43.8 L1131 43.8' fill='none' stroke='#efefed' stroke-width='2'/><rect x='1128.2' y='31' width='3' height='5.6' fill='#353734'/><path d='M1128.8 33 L1128.8 36.2 L1131 36.2' fill='none' stroke='#efefed' stroke-width='1.2'/><path d='M1120.8 67 L1126.4 67 L1127.2 70 L1131 70 L1131 81 L1120.8 81Z' fill='#efefed'/><path d='M1122.6 79.4 L1125.2 73.4 L1131 73.4 L1131 79.4Z' fill='#353734'/><path d='M1123.9 79.4 L1126 74.6 L1131 74.6 L1131 79.4Z' fill='#dededc'/><path d='M1127.8 103 L1131 103 L1131 111.8 L1129.4 111.8 L1125 107.8 L1127.8 107.8Z' fill='#17a317'/><path d='M1131 111 L1124.8 111 Q1122.6 112 1121.8 114.6 L1121.8 119 L1131 119Z' fill='#efefed'/><path d='M1124.6 112.2 Q1123.4 113 1123 114.4 L1131 114.4 L1131 112.2Z' fill='#353734' opacity='.0'/><rect x='1125.4' y='114.4' width='6' height='1.5' fill='#353734'/><rect x='1125.2' y='141.2' width='6' height='2' fill='#efefed'/><path d='M1131 144 L1123.6 144 Q1122 144 1122 145.6 L1122 149.6 L1131 149.6Z' fill='#c9c9c7'/><rect x='1124.6' y='148.4' width='7' height='6' fill='#353734'/><rect x='1125.4' y='149.2' width='6' height='4.8' fill='#efefed'/><path d='M1131 181.8 L1125 181.8 L1125 186.4 M1125 191.2 L1125 194.8 L1131 194.8' fill='none' stroke='#efefed' stroke-width='2'/><path d='M1121.8 188 L1127.4 188 L1127.4 186.2 L1131 188.6 L1131 189.4 L1127.4 191.8 L1127.4 190 L1121.8 190Z' fill='#17a317'/><path d='M1131 219.2 L1122 219.2 L1122 232 L1131 232' fill='none' stroke='#efefed' stroke-width='2'/><rect x='1128.2' y='217.4' width='3' height='5.6' fill='#353734'/><path d='M1128.8 219.4 L1128.8 222.6 L1131 222.6' fill='none' stroke='#efefed' stroke-width='1.2'/><rect x='1127.8' y='226' width='3' height='2' fill='#17a317'/><path d='M1121.8 265 L1126 261 L1126 264 L1131 264 L1131 266 L1126 266 L1126 269Z' fill='#efefed'/><path d='M1131 302 L1127.4 302 Q1124.4 302.4 1124.4 305.2 Q1124.4 308 1127 308.4' fill='none' stroke='#7f817e' stroke-width='1.9'/><rect x='1121' y='337.2' width='10' height='10.6' fill='#efefed'/><rect x='1125' y='342.2' width='7' height='11' fill='#353734'/><rect x='1126' y='343.2' width='6' height='9.6' fill='#efefed'/><path d='M1123.6 374.6 L1131 386.6' stroke='#efefed' stroke-width='1.9'/><path d='M1125.6 387.2 L1131 381.6' stroke='#efefed' stroke-width='1.9'/><circle cx='1124.3' cy='389' r='2.5' fill='none' stroke='#efefed' stroke-width='1.9'/><path d='M1131 413.5 L1121.5 413.5 L1121.5 426.4 L1131 426.4' fill='none' stroke='#efefed' stroke-width='1.1'/><rect x='1124.8' y='412' width='7' height='2.4' fill='#efefed'/><rect x='1123.8' y='415.6' width='8' height='9' fill='#e2e2e0'/><circle cx='1128.6' cy='459.5' r='7.6' fill='#efefed'/><path d='M1131 455.6 L1125 455.6 L1125 463.6 L1131 463.6' fill='none' stroke='#3a3c39' stroke-width='1.3' stroke-dasharray='1.2 1.2'/><circle cx='1128.6' cy='496.1' r='7.6' fill='#efefed'/><circle cx='1126.8' cy='494.6' r='2.7' fill='#3a3c39'/><rect x='1127.2' y='496' width='4' height='5.4' fill='#efefed'/><rect x='1128' y='496.8' width='4' height='4' fill='#3a3c39'/><circle cx='1128.6' cy='533.6' r='7.6' fill='#efefed'/><rect x='1125.2' y='528.6' width='8' height='10.4' fill='#3a3c39'/><rect x='1126.3' y='529.7' width='8' height='8.2' fill='#ebebe9'/><path d='M1124.4 563.2 L1122.4 563.2 L1122.4 565.4 M1122.4 575.6 L1122.4 577.8 L1124.4 577.8' fill='none' stroke='#9fa19e' stroke-width='1'/><path d='M1131 565.4 L1124.8 565.4 L1124.8 575.4 L1131 575.4' fill='none' stroke='#efefed' stroke-width='1.6'/><path d='M1127.2 570.4 L1131 570.4 M1129.8 567.6 L1129.8 573.2' stroke='#efefed' stroke-width='1.5'/><path d='M1122.6 609 L1131 609 L1131 615.4 L1129 615.4Z' fill='#efefed'/></svg>
</div>
<div id='dlg' style='left:334.0px;top:158.0px;width:389.8px;height:284.6px;background:#353734;border-radius:9px 9px 0 0;box-shadow:0 4px 16px 1px rgba(0,0,0,.27);border:1px solid #191b18;border-top:none'>
<div style='left:0;top:0;width:100%;height:37.8px;background:#262825;border-radius:8px 8px 0 0;border-bottom:1px solid #161815;box-shadow:inset 0 1px 0 #181a17'></div>
<span class='t ' style='left:107.60px;top:11.73px;font-size:14.5px;color:#f3f3f1;font-weight:700;'>png bitmap image import</span>
<svg style='left:365.2px;top:14.2px' width='10' height='10' viewBox='0 0 10 10'><path d='M1.2 1.2 L8.6 8.6 M8.6 1.2 L1.2 8.6' stroke='#f3f3f1' stroke-width='2.3'/></svg>
<span class='t ' style='left:11.40px;top:52.15px;font-size:14px;color:#e2e2e0;letter-spacing:0.605px;'>Image Import Type:</span>
<div class='radio' style='left:150.0px;top:53.0px'></div>
<span class='t ' style='left:169.60px;top:54.15px;font-size:14px;color:#e2e2e0;letter-spacing:0.707px;'>Embed</span>
<div class='radio on' style='left:150.0px;top:75.0px'></div>
<span class='t ' style='left:169.60px;top:76.15px;font-size:14px;color:#e2e2e0;letter-spacing:-0.228px;'>Link</span>
<div class='red' style='left:142.0px;top:70.8px;width:61.7px;height:27.2px'></div>
<span class='t ' style='left:11.40px;top:100.15px;font-size:14px;color:#e2e2e0;letter-spacing:0.229px;'>Image DPI:</span>
<div class='radio on' style='left:91.0px;top:101.0px'></div>
<span class='t ' style='left:110.60px;top:102.15px;font-size:14px;color:#e2e2e0;letter-spacing:0.467px;'>From file</span>
<div class='radio' style='left:91.0px;top:123.0px'></div>
<span class='t ' style='left:110.60px;top:124.15px;font-size:14px;color:#e2e2e0;letter-spacing:0.852px;'>Default import resolution</span>
<span class='t ' style='left:11.40px;top:148.15px;font-size:14px;color:#e2e2e0;letter-spacing:0.415px;'>Image Rendering Mode:</span>
<div class='radio on' style='left:178.0px;top:149.0px'></div>
<span class='t ' style='left:197.60px;top:150.15px;font-size:14px;color:#e2e2e0;letter-spacing:0.413px;'>None (auto)</span>
<div class='radio' style='left:178.0px;top:171.0px'></div>
<span class='t ' style='left:198.60px;top:172.15px;font-size:14px;color:#e2e2e0;letter-spacing:0.691px;'>Smooth (optimizeQuality)</span>
<div class='radio' style='left:178.0px;top:193.0px'></div>
<span class='t ' style='left:197.60px;top:194.15px;font-size:14px;color:#e2e2e0;letter-spacing:0.524px;'>Blocky (optimizeSpeed)</span>
<div class='chk' style='left:16.2px;top:219.2px'></div>
<span class='t ' style='left:35.60px;top:219.75px;font-size:14px;color:#e2e2e0;letter-spacing:0.366px;'>Don't ask again</span>
<div class='dbtn' style='left:210.4px;top:248.4px;width:85.2px;height:33px'></div>
<span class='t ' style='left:231.60px;top:257.55px;font-size:14px;color:#e2e2e0;letter-spacing:-0.094px;'>Cancel</span>
<div class='dbtn' style='left:300.4px;top:248.4px;width:84.6px;height:33px'></div>
<span class='t ' style='left:333.40px;top:257.55px;font-size:14px;color:#e2e2e0;letter-spacing:-1.690px;'>OK</span>
<div class='red' style='left:297.5px;top:243.0px;width:89.7px;height:42.0px'></div>
</div>
</body></html>
